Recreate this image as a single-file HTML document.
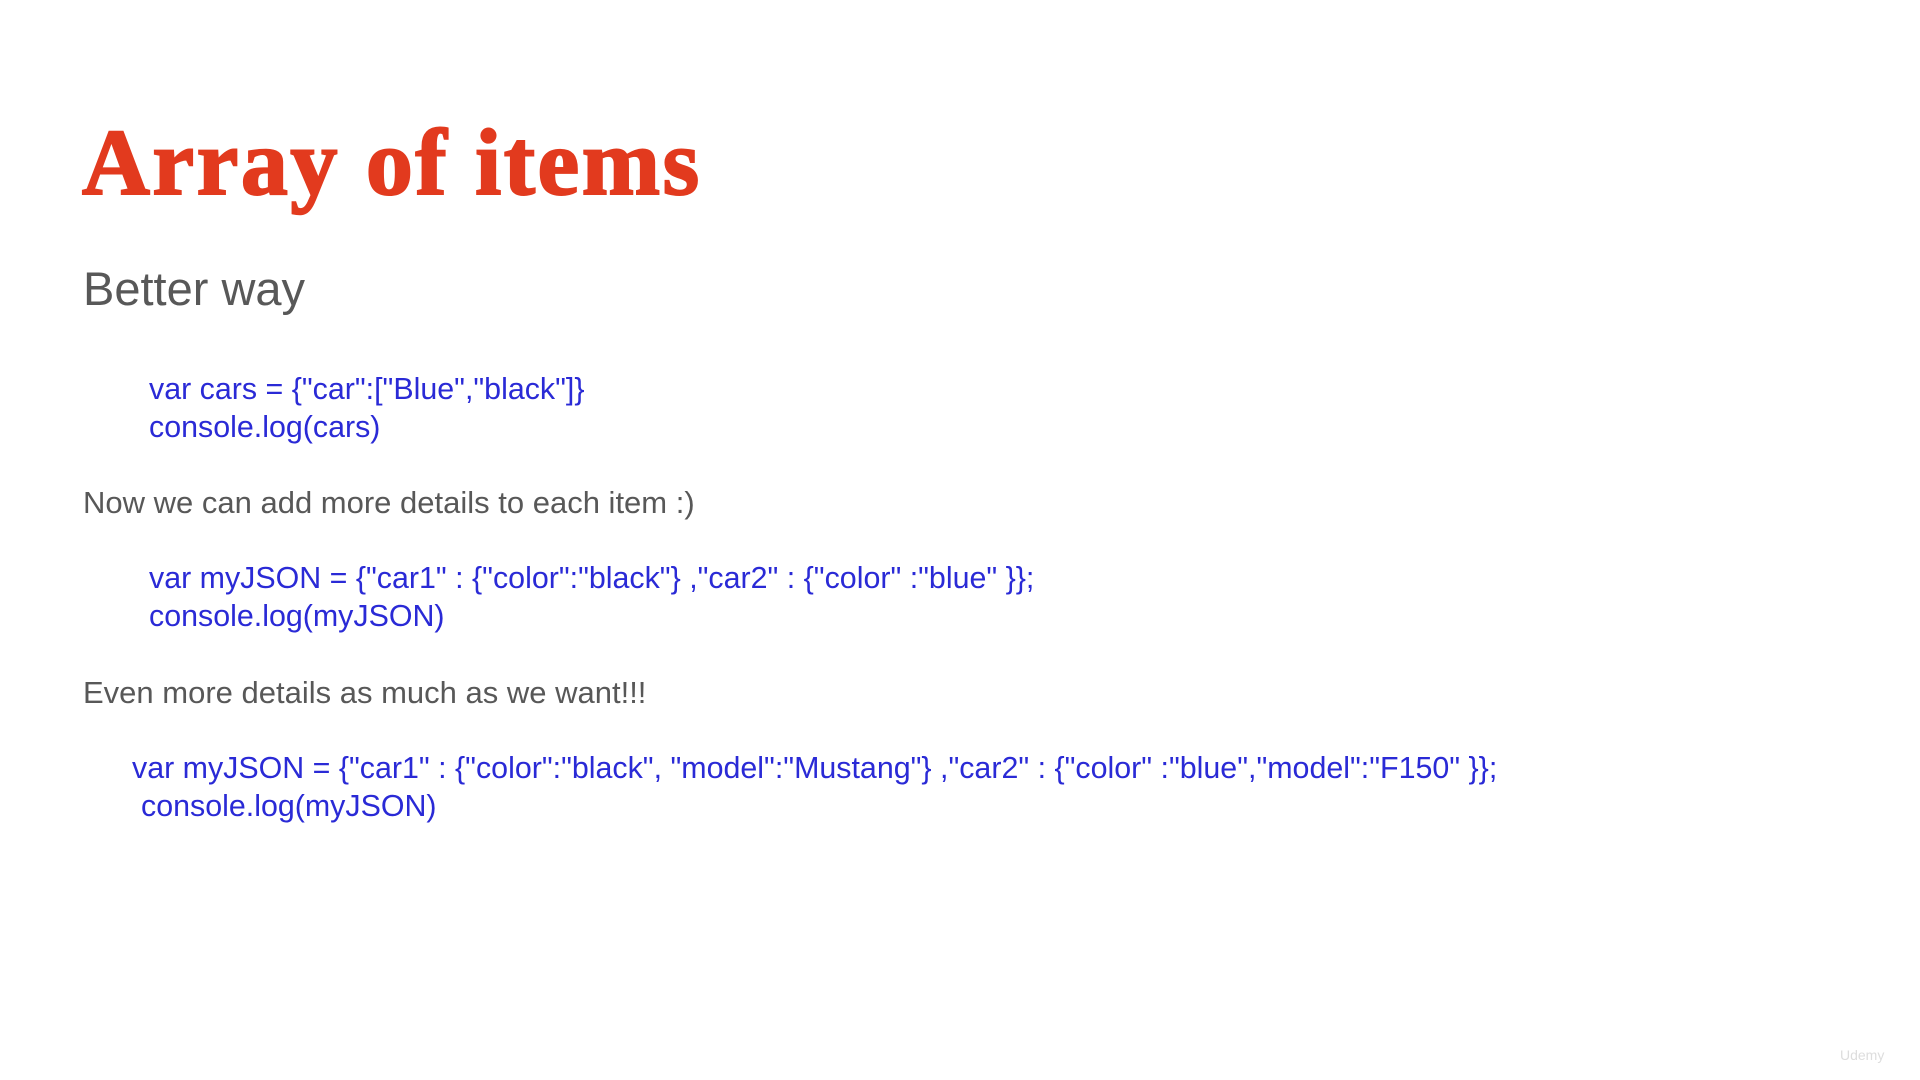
<!DOCTYPE html>
<html><head><meta charset="utf-8"><style>
html,body{margin:0;padding:0;background:#fff;width:1920px;height:1080px;overflow:hidden;position:relative}
div{position:absolute;white-space:pre;line-height:1}
.t{font-family:"Liberation Serif",serif;font-weight:bold;color:#e23a1e;font-size:94px;left:82px;top:116px;letter-spacing:2.5px;-webkit-text-stroke:2px #e23a1e}
.g{font-family:"Liberation Sans",sans-serif;color:#585858}
.c{font-family:"Liberation Sans",sans-serif;color:#2a2ad6;font-size:30.4px}
</style></head><body>
<div class="t">Array of items</div>
<div class="g" style="font-size:47px;left:83px;top:265px">Better way</div>
<div class="c" style="left:149px;top:374px">var cars = {"car":["Blue","black"]}</div>
<div class="c" style="left:149px;top:412px">console.log(cars)</div>
<div class="g" style="font-size:31px;left:83px;top:487px">Now we can add more details to each item :)</div>
<div class="c" style="left:149px;top:563px">var myJSON = {"car1" : {"color":"black"} ,"car2" : {"color" :"blue" }};</div>
<div class="c" style="left:149px;top:601px">console.log(myJSON)</div>
<div class="g" style="font-size:31px;left:83px;top:677px">Even more details as much as we want!!!</div>
<div class="c" style="left:132px;top:753px">var myJSON = {"car1" : {"color":"black", "model":"Mustang"} ,"car2" : {"color" :"blue","model":"F150" }};</div>
<div class="c" style="left:141px;top:791px">console.log(myJSON)</div>
<div style="left:1840px;top:1048px;font-family:'Liberation Sans',sans-serif;font-size:14px;color:#ddd">Udemy</div>
</body></html>
